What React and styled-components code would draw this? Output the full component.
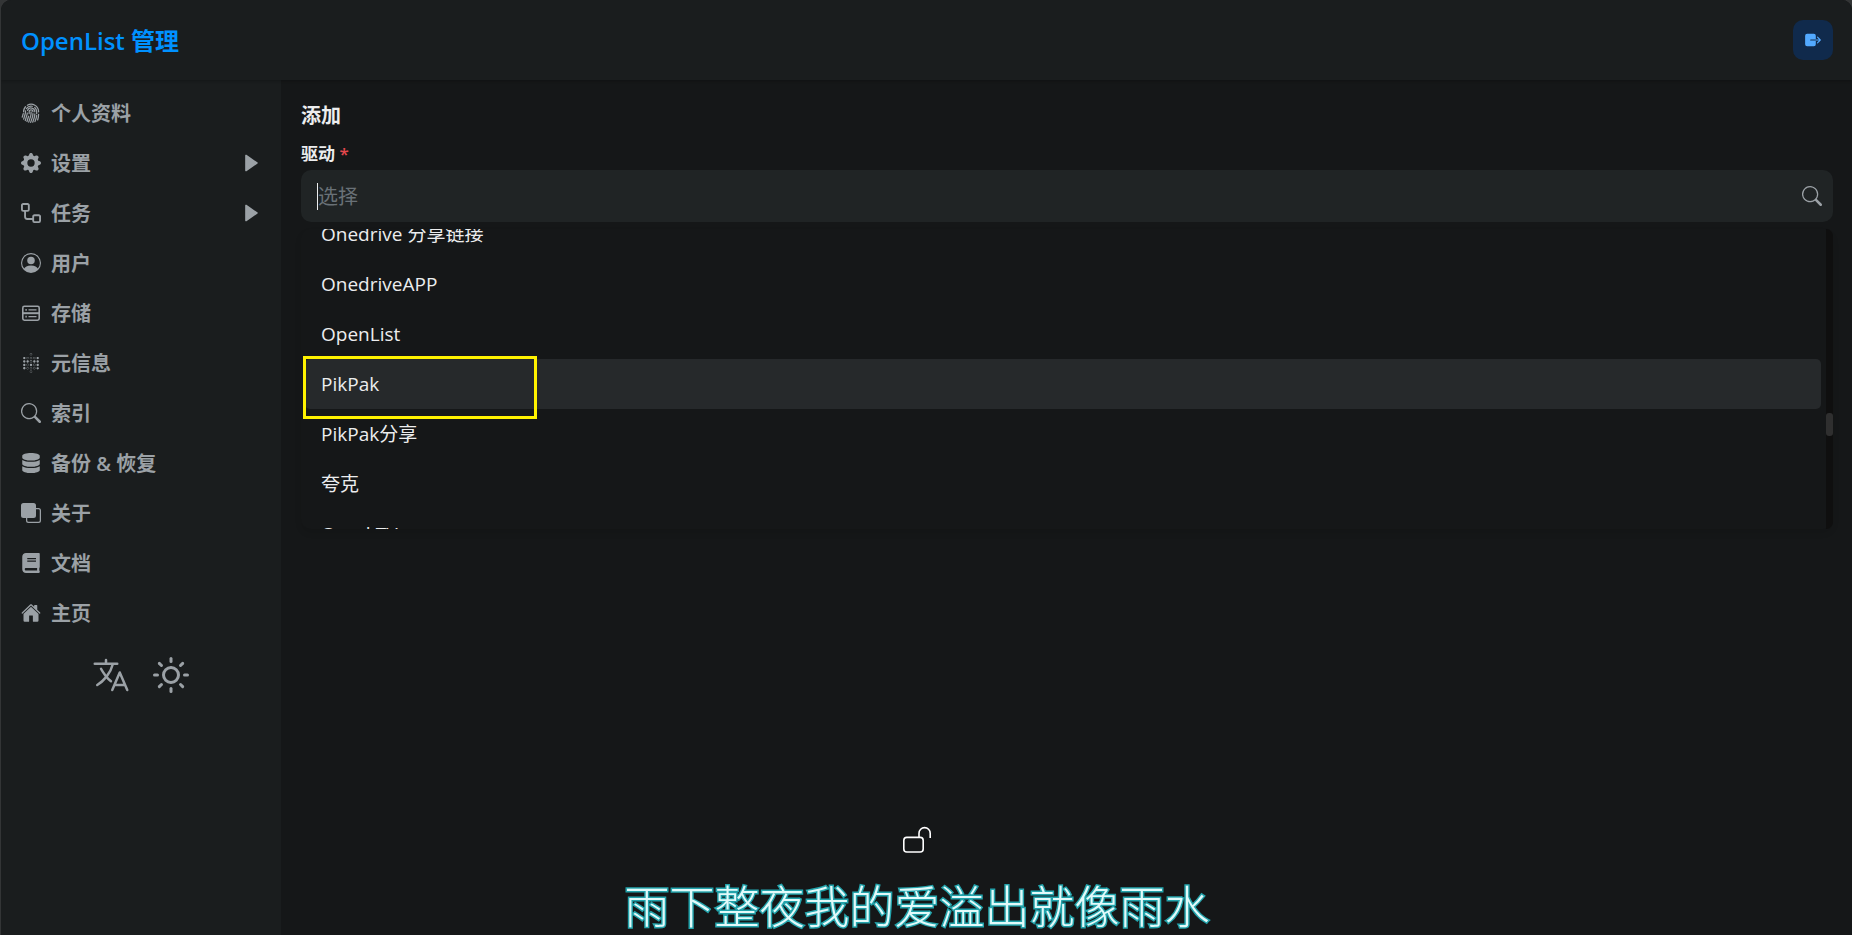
import React, { useEffect, useRef, useState } from 'react'
import styled, { createGlobalStyle } from 'styled-components'
import { BsFingerprint, BsGearFill, BsPersonCircle, BsSearch, BsFront } from 'react-icons/bs'
import { FaBook, FaDatabase } from 'react-icons/fa'
import { IoExit, IoHome, IoLanguageOutline } from 'react-icons/io5'
import { SiMetabase } from 'react-icons/si'
import { FiSun } from 'react-icons/fi'
import { BiSolidRightArrow } from 'react-icons/bi'

const WorkflowIcon = () => (
  <svg width="20" height="20" viewBox="0 0 16 16" fill="currentColor">
    <path d="M0 1.75C0 .784.784 0 1.75 0h3.5C6.216 0 7 .784 7 1.75v3.5A1.75 1.75 0 0 1 5.25 7H4v4a1 1 0 0 0 1 1h4v-1.25C9 9.784 9.784 9 10.75 9h3.5c.966 0 1.75.784 1.75 1.75v3.5A1.75 1.75 0 0 1 14.25 16h-3.5A1.75 1.75 0 0 1 9 14.25v-.75H5A2.5 2.5 0 0 1 2.5 11V7h-.75A1.75 1.75 0 0 1 0 5.25Zm1.75-.25a.25.25 0 0 0-.25.25v3.5c0 .138.112.25.25.25h3.5a.25.25 0 0 0 .25-.25v-3.5a.25.25 0 0 0-.25-.25Zm9 9a.25.25 0 0 0-.25.25v3.5c0 .138.112.25.25.25h3.5a.25.25 0 0 0 .25-.25v-3.5a.25.25 0 0 0-.25-.25Z" />
  </svg>
)

const StorageIcon = () => (
  <svg width="20" height="20" viewBox="0 0 20 20" fill="none" stroke="currentColor">
    <rect x="1.8" y="3.3" width="16.4" height="13.9" rx="1.6" strokeWidth="1.6" />
    <path d="M2 10.2h16" strokeWidth="2" />
    <path d="M7.5 6.9h8M7.5 13.6h8" strokeWidth="1.3" />
    <path d="M4.4 6.9h1.4M4.4 13.6h1.4" strokeWidth="1.8" />
  </svg>
)

const UnlockIcon = () => (
  <svg width="30" height="28" viewBox="0 0 30 28" fill="none" stroke="#ffffff" strokeWidth="1.6">
    <rect x="1.8" y="11.4" width="19.4" height="14.6" rx="3" />
    <path d="M17 11V7.2a5.6 5.6 0 0 1 11.2 0V12" />
  </svg>
)

const menu = [
  { label: '个人资料', icon: BsFingerprint },
  { label: '设置', icon: BsGearFill, group: true },
  { label: '任务', icon: WorkflowIcon, group: true },
  { label: '用户', icon: BsPersonCircle },
  { label: '存储', icon: StorageIcon },
  { label: '元信息', icon: SiMetabase },
  { label: '索引', icon: BsSearch },
  { label: '备份 & 恢复', icon: FaDatabase },
  { label: '关于', icon: BsFront },
  { label: '文档', icon: FaBook },
  { label: '主页', icon: IoHome },
]

const drivers = ['Onedrive 分享链接', 'OnedriveAPP', 'OpenList', 'PikPak', 'PikPak分享', '夸克', 'QuarkTV']

export default function App() {
  const [active, setActive] = useState('PikPak')
  const listRef = useRef(null)

  useEffect(() => {
    listRef.current.scrollTop = 20
  }, [])

  return (
    <>
      <GlobalStyle />
      <Window>
        <Header>
          <Title>OpenList 管理</Title>
          <LogoutButton type="button" aria-label="退出">
            <IoExit size={18} />
          </LogoutButton>
        </Header>
        <Body>
          <Sidebar>
            {menu.map(({ label, icon: Icon, group }) => (
              <MenuItem key={label} as={group ? 'button' : 'a'} href={group ? undefined : '#'}>
                <Icon size={20} />
                <MenuLabel>{label}</MenuLabel>
                {group && <BiSolidRightArrow size={20} />}
              </MenuItem>
            ))}
            <Tools>
              <ToolButton type="button" aria-label="语言">
                <IoLanguageOutline size={40} />
              </ToolButton>
              <ToolButton type="button" aria-label="主题">
                <FiSun size={36} />
              </ToolButton>
            </Tools>
          </Sidebar>
          <Main>
            <Heading>添加</Heading>
            <FieldLabel htmlFor="driver">
              驱动 <Required>*</Required>
            </FieldLabel>
            <SearchBox>
              <Caret />
              <SearchInput id="driver" type="text" placeholder="选择" />
              <BsSearch size={20} />
            </SearchBox>
            <Dropdown>
              <OptionList ref={listRef} role="listbox">
                {drivers.map((name) => (
                  <Option
                    key={name}
                    role="option"
                    aria-selected={name === active}
                    $active={name === active}
                    onMouseEnter={() => setActive(name)}
                  >
                    {name}
                  </Option>
                ))}
              </OptionList>
              <Track>
                <Thumb />
              </Track>
              <Highlight />
            </Dropdown>
          </Main>
        </Body>
      </Window>
      <Lyrics>
        <UnlockIcon />
        <LyricLine>雨下整夜我的爱溢出就像雨水</LyricLine>
      </Lyrics>
    </>
  )
}

const GlobalStyle = createGlobalStyle`
  * {
    box-sizing: border-box;
  }
  body {
    margin: 0;
    background: #333536;
    font-family: 'Open Sans', 'Noto Sans CJK SC', sans-serif;
    font-size: 20px;
    color: #ecedee;
  }
  button, input {
    font: inherit;
    color: inherit;
    border: 0;
    background: none;
    padding: 0;
  }
`

const Window = styled.div`
  display: flex;
  flex-direction: column;
  min-height: 100vh;
  margin-left: 1px;
  border-radius: 10px 10px 0 0;
  overflow: hidden;
  background: #151718;
`

const Header = styled.header`
  display: flex;
  align-items: center;
  justify-content: space-between;
  height: 80px;
  padding: 0 19px 0 20px;
  background: #1a1d1e;
  box-shadow: 0 1px 3px rgba(0, 0, 0, 0.25);
  z-index: 1;
`

const Title = styled.h1`
  margin: 0;
  padding-top: 2px;
  font-size: 24px;
  font-weight: 600;
  line-height: 32px;
  color: #0091ff;
`

const LogoutButton = styled.button`
  display: flex;
  align-items: center;
  justify-content: center;
  width: 40px;
  height: 40px;
  border-radius: 10px;
  background: #102a4c;
  color: #52a9ff;
  cursor: pointer;
`

const Body = styled.div`
  display: flex;
  flex: 1;
`

const Sidebar = styled.nav`
  width: 280px;
  padding-top: 8px;
  background: #1a1d1e;
  color: #9ba1a6;
`

const MenuItem = styled.a`
  display: flex;
  align-items: center;
  gap: 10px;
  width: 100%;
  height: 50px;
  padding: 0 20px;
  color: #9ba1a6;
  text-decoration: none;
  cursor: pointer;
`

const MenuLabel = styled.span`
  flex: 1;
  padding-top: 2px;
  font-weight: 600;
  line-height: 30px;
  text-align: left;
`

const Tools = styled.div`
  display: flex;
  align-items: center;
  justify-content: center;
  gap: 20px;
  padding-top: 17px;
`

const ToolButton = styled.button`
  display: flex;
  align-items: center;
  justify-content: center;
  width: 40px;
  height: 40px;
  color: #9ba1a6;
  cursor: pointer;
`

const Main = styled.main`
  flex: 1;
  display: flex;
  flex-direction: column;
  padding: 20px 19px 20px 20px;
`

const Heading = styled.h2`
  margin: 0;
  font-size: 20px;
  font-weight: 700;
  line-height: 32px;
`

const FieldLabel = styled.label`
  margin: 9px 0 3px;
  font-size: 17px;
  font-weight: 600;
  line-height: 26px;
`

const Required = styled.span`
  color: #e5484d;
`

const SearchBox = styled.div`
  display: flex;
  align-items: center;
  height: 52px;
  padding: 0 11px 0 16px;
  border-radius: 10px;
  background: #202425;
  color: #9ba1a6;
`

const Caret = styled.span`
  width: 1px;
  height: 27px;
  background: #ecedee;
`

const SearchInput = styled.input`
  flex: 1;
  min-width: 0;
  height: 40px;
  outline: none;
  color: #ecedee;
  caret-color: transparent;

  &::placeholder {
    color: #697177;
    opacity: 1;
  }
`

const Dropdown = styled.div`
  position: relative;
  display: flex;
  height: 300px;
  margin-top: 7px;
  border-radius: 10px;
  box-shadow: 0 4px 6px rgba(0, 0, 0, 0.1);
`

const OptionList = styled.ul`
  flex: 1;
  margin: 0;
  padding: 0 5px 0 4px;
  overflow-y: auto;
  scrollbar-width: none;
  list-style: none;
`

const Option = styled.li`
  height: 50px;
  padding: 0 16px;
  border-radius: 5px;
  font-size: 19px;
  line-height: 50px;
  background: ${({ $active }) => ($active ? '#26292b' : 'transparent')};
  cursor: pointer;
`

const Track = styled.div`
  width: 7px;
  padding-top: 184px;
  border-radius: 0 7px 7px 0;
  background: #0f0f0f;
`

const Thumb = styled.div`
  height: 23px;
  border-radius: 3px;
  background: #2f2f2f;
`

const Highlight = styled.div`
  position: absolute;
  top: 127px;
  left: 2px;
  width: 234px;
  height: 63px;
  border: 3px solid #fff200;
  pointer-events: none;
`

const Lyrics = styled.div`
  position: fixed;
  left: 0;
  right: 18px;
  bottom: 0;
  display: flex;
  flex-direction: column;
  align-items: center;
  gap: 25px;
  pointer-events: none;
`

const LyricLine = styled.p`
  margin: 0;
  font-size: 45px;
  font-weight: 300;
  line-height: 56px;
  white-space: nowrap;
  color: #e2fafa;
  paint-order: stroke;
  -webkit-text-stroke: 3px #23a3ab;
`
